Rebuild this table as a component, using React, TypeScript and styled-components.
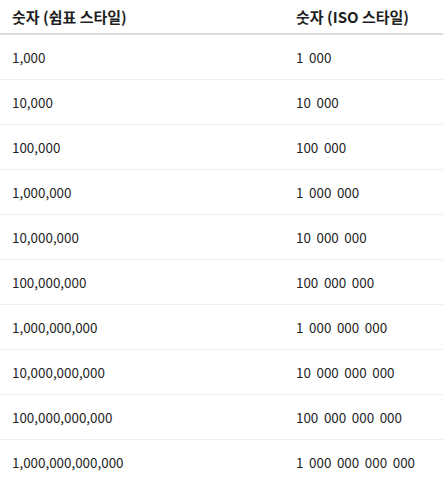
import React from "react";
import styled, { createGlobalStyle } from "styled-components";

const Global = createGlobalStyle`
  html, body { margin: 0; padding: 0; background: #ffffff; }
  body { font-family: "Noto Sans CJK KR", "Noto Sans", sans-serif; color: #1f1f1f; }
`;

const Table = styled.table`
  width: 443px;
  border-collapse: collapse;
  table-layout: fixed;
`;

const HeadCell = styled.th<{ $w?: number }>`
  ${(p) => (p.$w ? `width: ${p.$w}px;` : "")}
  text-align: left;
  font-weight: 700;
  font-size: 15px;
  height: 34px;
  padding: 0 12px;
  border-bottom: 2px solid #dcdcdc;
  vertical-align: middle;
  box-sizing: border-box;
`;

const Row = styled.tr<{ $last?: boolean }>`
  border-bottom: ${(p) => (p.$last ? "none" : "1px solid #efefef")};
`;

const Cell = styled.td<{ $spaced?: boolean }>`
  height: 45px;
  padding: 0 12px;
  vertical-align: middle;
  box-sizing: border-box;
  font-weight: 400;
  font-size: 13.4px;
  word-spacing: ${(p) => (p.$spaced ? "2.6px" : "0")};
`;

const rows: [string, string][] = [
  ["1,000", "1 000"],
  ["10,000", "10 000"],
  ["100,000", "100 000"],
  ["1,000,000", "1 000 000"],
  ["10,000,000", "10 000 000"],
  ["100,000,000", "100 000 000"],
  ["1,000,000,000", "1 000 000 000"],
  ["10,000,000,000", "10 000 000 000"],
  ["100,000,000,000", "100 000 000 000"],
  ["1,000,000,000,000", "1 000 000 000 000"],
];

export default function App() {
  return (
    <>
      <Global />
      <Table>
        <thead>
          <tr>
            <HeadCell $w={284}>숫자 (쉼표 스타일)</HeadCell>
            <HeadCell>숫자 (ISO 스타일)</HeadCell>
          </tr>
        </thead>
        <tbody>
          {rows.map(([a, b], i) => (
            <Row key={a} $last={i === rows.length - 1}>
              <Cell>{a}</Cell>
              <Cell $spaced>{b}</Cell>
            </Row>
          ))}
        </tbody>
      </Table>
    </>
  );
}
